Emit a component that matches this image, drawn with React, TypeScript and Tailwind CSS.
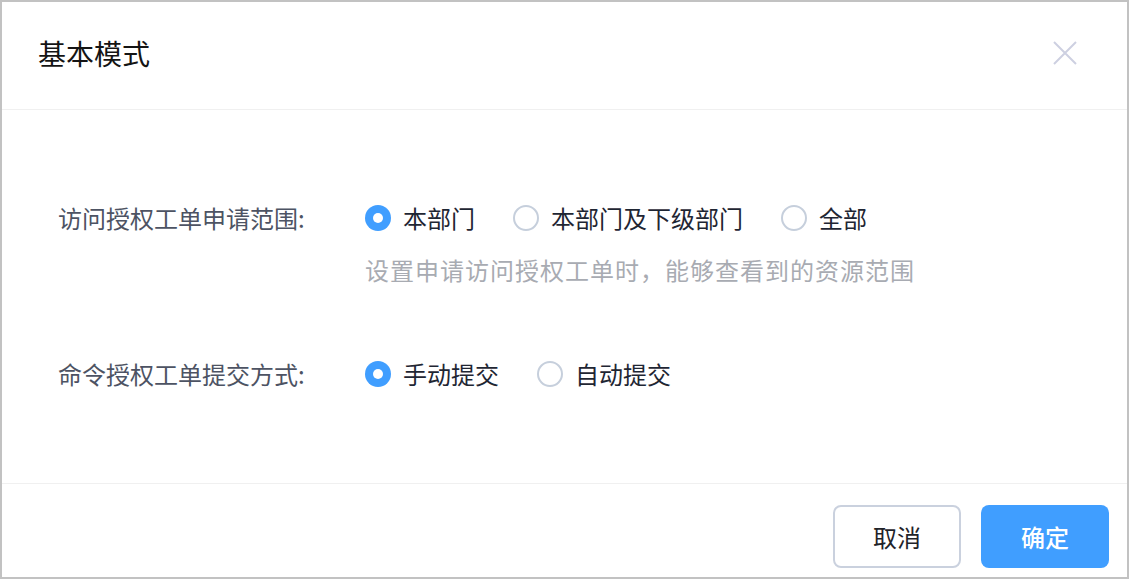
import { useState } from "react";

const scopeOptions = ["本部门", "本部门及下级部门", "全部"];
const submitOptions = ["手动提交", "自动提交"];

const Radio = ({
  label,
  checked,
  onClick,
}: {
  label: string;
  checked: boolean;
  onClick: () => void;
}) => (
  <label
    className="flex items-center mr-[38px] cursor-pointer select-none"
    onClick={onClick}
  >
    <span
      className={
        checked
          ? "w-[26px] h-[26px] rounded-full bg-[#409eff] flex items-center justify-center"
          : "w-[26px] h-[26px] rounded-full border-2 border-[#c6cfdc] bg-white"
      }
    >
      {checked && <span className="w-[10px] h-[10px] rounded-full bg-white" />}
    </span>
    <span className="ml-[12px] text-[24px] leading-[28px] text-[#1f2633]">
      {label}
    </span>
  </label>
);

export default function App() {
  const [scope, setScope] = useState(0);
  const [submit, setSubmit] = useState(0);

  return (
    <div
      className="w-[1129px] h-[579px] border-2 border-[#c2c2c2] bg-white flex flex-col overflow-hidden"
      style={{ fontFamily: '"Noto Sans CJK SC", "Noto Sans", sans-serif' }}
    >
      {/* header */}
      <div className="h-[108px] shrink-0 border-b border-[#f0f0f0] flex items-center justify-between pl-[36px] pr-[50px] pb-[6px]">
        <h2 className="text-[28px] leading-[36px] text-[#141414]">基本模式</h2>
        <svg width="24" height="24" viewBox="0 0 24 24" fill="none">
          <path
            d="M1 1L23 23M23 1L1 23"
            stroke="#cdd0e1"
            strokeWidth="2"
          />
        </svg>
      </div>

      {/* body */}
      <div className="flex-1 pt-[94px]">
        <div className="flex items-center">
          <span className="w-[363px] pl-[56px] text-[24px] leading-[28px] text-[#4d5363]">
            访问授权工单申请范围:
          </span>
          {scopeOptions.map((o, i) => (
            <Radio
              key={o}
              label={o}
              checked={scope === i}
              onClick={() => setScope(i)}
            />
          ))}
        </div>
        <p className="mt-[24px] pl-[363px] text-[24px] leading-[28px] tracking-[1px] text-[#a8abb2]">
          设置申请访问授权工单时，能够查看到的资源范围
        </p>
        <div className="flex items-center mt-[76px]">
          <span className="w-[363px] pl-[56px] text-[24px] leading-[28px] text-[#4d5363]">
            命令授权工单提交方式:
          </span>
          {submitOptions.map((o, i) => (
            <Radio
              key={o}
              label={o}
              checked={submit === i}
              onClick={() => setSubmit(i)}
            />
          ))}
        </div>
      </div>

      {/* footer */}
      <div className="h-[94px] shrink-0 border-t border-[#f0f0f0] flex justify-end items-start pt-[21px] pr-[18px] gap-[20px]">
        <button className="w-[128px] h-[63px] rounded-[8px] border-2 border-[#cad1de] bg-white text-[24px] text-[#1f2329]">
          取消
        </button>
        <button className="w-[128px] h-[63px] rounded-[8px] bg-[#409eff] text-[24px] font-medium text-white">
          确定
        </button>
      </div>
    </div>
  );
}
